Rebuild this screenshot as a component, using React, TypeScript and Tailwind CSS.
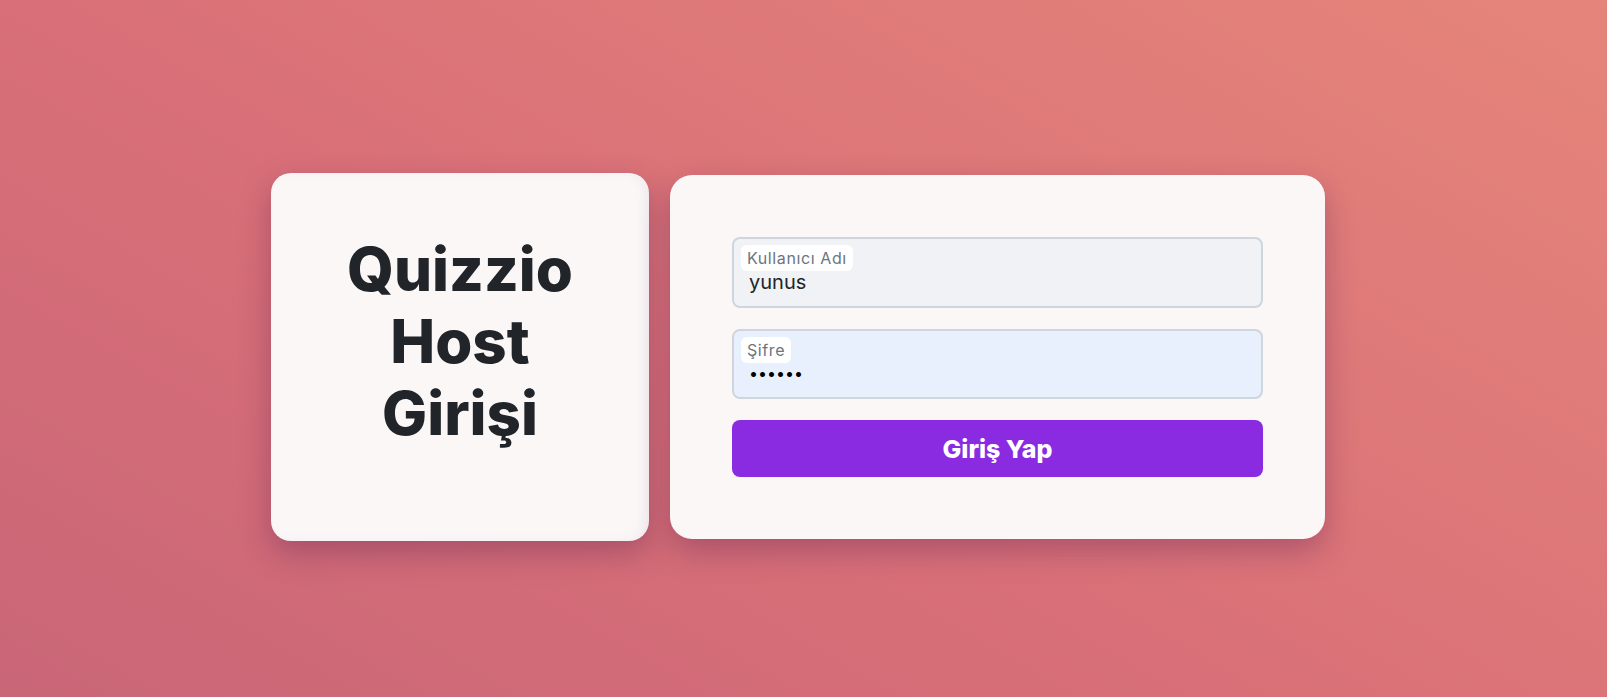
const font = { fontFamily: "Inter, 'Noto Sans', sans-serif" };

const FloatingField = ({
  label,
  value,
  type = "text",
  bg,
}: {
  label: string;
  value: string;
  type?: string;
  bg: string;
}) => (
  <div
    className={`relative h-[71px] w-full rounded-[8px] border-2 border-[#cfd5dd] ${bg}`}
  >
    {/* Label chip */}
    <span className="absolute left-[7px] top-[6px] rounded-[6px] bg-white px-[6px] py-[3px] text-[16px] leading-[20px] tracking-[0.6px] text-[#6c757d]">
      {label}
    </span>
    <input
      type={type}
      defaultValue={value}
      className={`absolute inset-x-0 bottom-0 h-[42px] w-full bg-transparent px-[15px] pb-[6px] outline-none ${
        type === "password" ? "text-[16px] text-black" : "text-[20px] text-[#212529]"
      }`}
      style={font}
    />
  </div>
);

export default function App() {
  return (
    <div
      className="flex h-[697px] w-full items-center justify-center gap-[21px] bg-[linear-gradient(30deg,#c96677_0%,#d97078_45%,#e5857a_100%)] pr-[11px] pt-[17px]"
      style={font}
    >
      {/* Title card */}
      <div className="flex h-[368px] w-[378px] items-center justify-center rounded-[20px] bg-[#fbf7f7] pb-[32px] shadow-[0_12px_30px_rgba(90,30,80,0.35),inset_-6px_0_10px_rgba(120,90,140,0.06)]">
        <h1 className="text-center text-[60px] font-extrabold leading-[72px] text-[#212529]">
          Quizzio
          <br />
          Host
          <br />
          Girişi
        </h1>
      </div>

      {/* Login card */}
      <div className="flex h-[364px] w-[655px] flex-col gap-[21px] rounded-[22px] bg-[#fbf7f7] p-[62px] shadow-[0_12px_30px_rgba(90,30,80,0.35)]">
        <FloatingField label="Kullanıcı Adı" value="yunus" bg="bg-[#f0f2f5]" />
        <FloatingField label="Şifre" value="123456" type="password" bg="bg-[#e8f0fe]" />
        <button className="h-[57px] w-full rounded-[8px] bg-[#8a2be2] pt-[3px] text-[25px] font-extrabold text-white">
          Giriş Yap
        </button>
      </div>
    </div>
  );
}
